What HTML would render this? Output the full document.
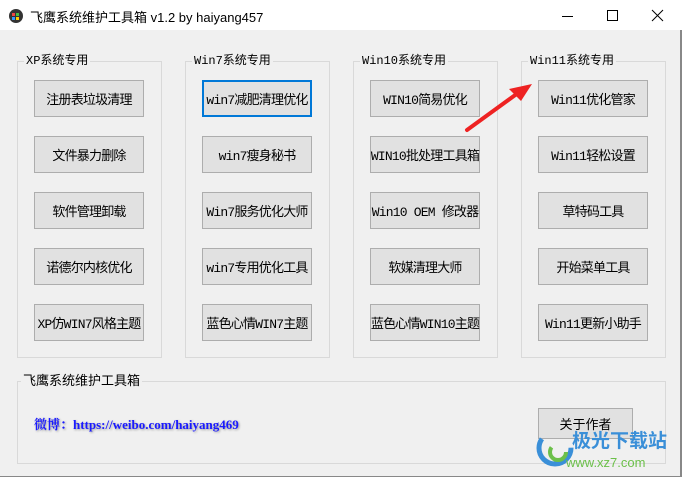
<!DOCTYPE html>
<html><head><meta charset="utf-8"><style>
body{margin:0;width:682px;height:477px;overflow:hidden;background:#f0f0f0;font-family:"Liberation Sans","Noto Sans CJK SC",sans-serif;position:relative}
.t{position:absolute;left:0;top:0;width:682px;height:30px;background:#fff}
.t span{position:absolute;left:30px;top:7px;font-size:13px;color:#000}
.g{position:absolute;border:1px solid #d9d9d9}
.gl{position:absolute;background:#f0f0f0;font-family:"Liberation Mono","Noto Sans CJK SC",monospace;font-size:12px;padding:0 2px;top:-9px;left:6px;line-height:16px;color:#000}
.b{position:absolute;width:108px;height:35px;border:1px solid #adadad;background:#e1e1e1;font-family:"Liberation Mono","Noto Sans CJK SC",monospace;font-size:13px;display:flex;align-items:center;justify-content:center;color:#000;white-space:nowrap;letter-spacing:-0.8px}
.sel{border:2px solid #0078d7;width:106px;height:33px}
</style></head><body>
<div class="t">
<svg style="position:absolute;left:8px;top:8px" width="16" height="16"><circle cx="8" cy="8" r="7" fill="#333"/><path d="M4 5h3v3H4z" fill="#e44"/><path d="M8 5h3v3H8z" fill="#4b4"/><path d="M4 9h3v3H4z" fill="#39f"/><path d="M8 9h3v3H8z" fill="#fc0"/></svg>
<span>飞鹰系统维护工具箱 v1.2 by haiyang457</span>
<svg style="position:absolute;left:560px;top:9px" width="110" height="14"><path d="M2 7.5h11" stroke="#000"/><path d="M47.5 1.5h10v10h-10z" fill="none" stroke="#000"/><path d="M92 1l11 11M103 1L92 12" stroke="#000"/></svg>
</div>
<div style="position:absolute;right:0;top:30px;width:2px;height:447px;background:#888"></div>
<div style="position:absolute;left:0;bottom:0;width:682px;height:1px;background:#888"></div>

<div class="g" style="left:17px;top:61px;width:143px;height:295px"><div class="gl">XP系统专用</div></div>
<div class="g" style="left:185px;top:61px;width:143px;height:295px"><div class="gl">Win7系统专用</div></div>
<div class="g" style="left:353px;top:61px;width:143px;height:295px"><div class="gl">Win10系统专用</div></div>
<div class="g" style="left:521px;top:61px;width:143px;height:295px"><div class="gl">Win11系统专用</div></div>

<div class="b" style="left:34px;top:80px">注册表垃圾清理</div>
<div class="b" style="left:34px;top:136px">文件暴力删除</div>
<div class="b" style="left:34px;top:192px">软件管理卸载</div>
<div class="b" style="left:34px;top:248px">诺德尔内核优化</div>
<div class="b" style="left:34px;top:304px">XP仿WIN7风格主题</div>

<div class="b sel" style="left:202px;top:80px">win7减肥清理优化</div>
<div class="b" style="left:202px;top:136px">win7瘦身秘书</div>
<div class="b" style="left:202px;top:192px">Win7服务优化大师</div>
<div class="b" style="left:202px;top:248px">win7专用优化工具</div>
<div class="b" style="left:202px;top:304px">蓝色心情WIN7主题</div>

<div class="b" style="left:370px;top:80px">WIN10简易优化</div>
<div class="b" style="left:370px;top:136px">WIN10批处理工具箱</div>
<div class="b" style="left:370px;top:192px">Win10 OEM 修改器</div>
<div class="b" style="left:370px;top:248px">软媒清理大师</div>
<div class="b" style="left:370px;top:304px">蓝色心情WIN10主题</div>

<div class="b" style="left:538px;top:80px">Win11优化管家</div>
<div class="b" style="left:538px;top:136px">Win11轻松设置</div>
<div class="b" style="left:538px;top:192px">草特码工具</div>
<div class="b" style="left:538px;top:248px">开始菜单工具</div>
<div class="b" style="left:538px;top:304px">Win11更新小助手</div>

<div class="g" style="left:17px;top:381px;width:647px;height:81px"><div class="gl" style="font-family:'Liberation Sans','Noto Sans CJK SC',sans-serif;font-size:13px;left:3px">飞鹰系统维护工具箱</div></div>
<div style="position:absolute;left:34px;top:414px;font-family:'Liberation Serif','Noto Serif CJK SC',serif;font-weight:bold;font-size:13px;color:#1a1aff;text-shadow:1px 1px 2px #999">微博：https://weibo.com/haiyang469</div>
<div class="b" style="left:538px;top:408px;width:93px;height:29px;font-family:'Liberation Sans','Noto Sans CJK SC',sans-serif;font-size:13px;letter-spacing:0">关于作者</div>

<svg style="position:absolute;left:0;top:0" width="682" height="477">
<path d="M467 130L518 93" stroke="#e22" stroke-width="4" stroke-linecap="round"/>
<path d="M532 84L509 89L521 101Z" fill="#e22"/>
<circle cx="555" cy="448" r="16" fill="none" stroke="#3a8fd8" stroke-width="5" stroke-dasharray="60 40"/>
<circle cx="558" cy="452" r="8" fill="none" stroke="#6cc04a" stroke-width="4" stroke-dasharray="30 20"/>
<text x="572" y="447" font-family="Noto Sans CJK SC" font-weight="bold" font-size="19" fill="#3a8fd8">极光下载站</text>
<text x="566" y="467" font-family="Liberation Sans" font-size="13" fill="#6cc04a">www.xz7.com</text>
</svg>
</body></html>
